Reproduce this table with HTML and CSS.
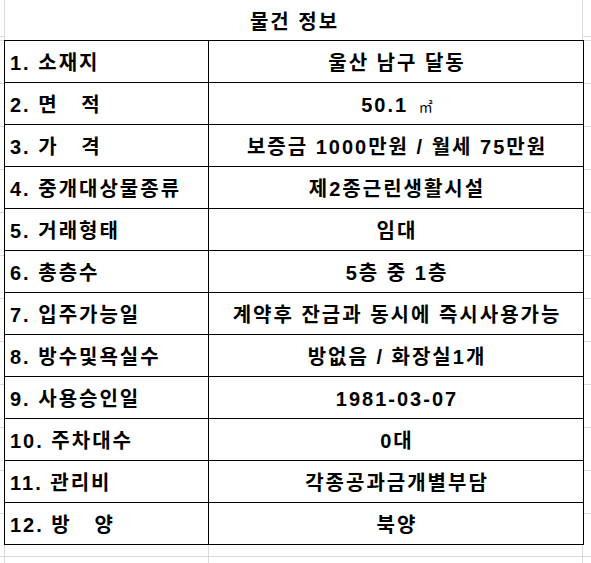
FILE: index.html
```html
<!DOCTYPE html>
<html lang="ko">
<head>
<meta charset="utf-8">
<title>물건 정보</title>
<link rel="stylesheet" href="styles.css">
</head>
<body>
<div class="sheet">
  <div class="title">물건 정보</div>
  <table class="info">
    <colgroup><col class="c1"><col class="c2"></colgroup>
    <tbody>
      <tr><td class="label">1. 소재지</td><td class="value">울산 남구 달동</td></tr>
      <tr><td class="label">2. 면   적</td><td class="value">50.1 <span class="unit">㎡</span></td></tr>
      <tr><td class="label">3. 가   격</td><td class="value">보증금 1000만원 / 월세 75만원</td></tr>
      <tr><td class="label">4. 중개대상물종류</td><td class="value">제2종근린생활시설</td></tr>
      <tr><td class="label">5. 거래형태</td><td class="value">임대</td></tr>
      <tr><td class="label">6. 총층수</td><td class="value">5층 중 1층</td></tr>
      <tr><td class="label">7. 입주가능일</td><td class="value">계약후 잔금과 동시에 즉시사용가능</td></tr>
      <tr><td class="label">8. 방수및욕실수</td><td class="value">방없음 / 화장실1개</td></tr>
      <tr><td class="label">9. 사용승인일</td><td class="value">1981-03-07</td></tr>
      <tr><td class="label">10. 주차대수</td><td class="value">0대</td></tr>
      <tr><td class="label">11. 관리비</td><td class="value">각종공과금개별부담</td></tr>
      <tr><td class="label">12. 방   양</td><td class="value">북양</td></tr>
    </tbody>
  </table>
</div>
</body>
</html>
```
FILE: styles.css
```css
html, body {
  margin: 0;
  padding: 0;
}
body {
  width: 591px;
  height: 563px;
  overflow: hidden;
  background-color: #fff;
  background-image:
    linear-gradient(to right, transparent 4px, #dadada 4px 5px, transparent 5px 208px, #dadada 208px 209px, transparent 209px 582px, #dadada 582px 583px, transparent 583px),
    repeating-linear-gradient(to bottom, #dadada 0 1px, transparent 1px 43px);
  background-position: 0 0, 0 40px;
  font-family: "Liberation Sans", "Noto Sans CJK KR", sans-serif;
  font-weight: bold;
  font-size: 20px;
  letter-spacing: 2px;
  color: #000;
}
.sheet {
  padding-left: 4px;
  width: 579px;
}
.title {
  height: 40px;
  box-sizing: border-box;
  background: #fff;
  border-left: 1px solid #dadada;
  border-right: 1px solid #dadada;
  display: flex;
  align-items: center;
  justify-content: center;
  padding: 1px 0 0 2px;
}
.info {
  border-collapse: collapse;
  width: 579px;
  table-layout: fixed;
  background: #fff;
}
.c1 { width: 204px; }
.c2 { width: 375px; }
.info td {
  border: 1px solid #000;
  height: 42px;
  padding: 2px 0 0 0;
  box-sizing: border-box;
  white-space: pre;
  line-height: 1;
}
.label {
  text-align: left;
  padding-left: 5px !important;
}
.value {
  text-align: center;
  padding-left: 2px !important;
}
.unit {
  font-size: 14px;
  font-weight: normal;
  letter-spacing: 0;
  margin-left: 3px;
  font-family: "Noto Sans CJK KR", sans-serif;
}
```
